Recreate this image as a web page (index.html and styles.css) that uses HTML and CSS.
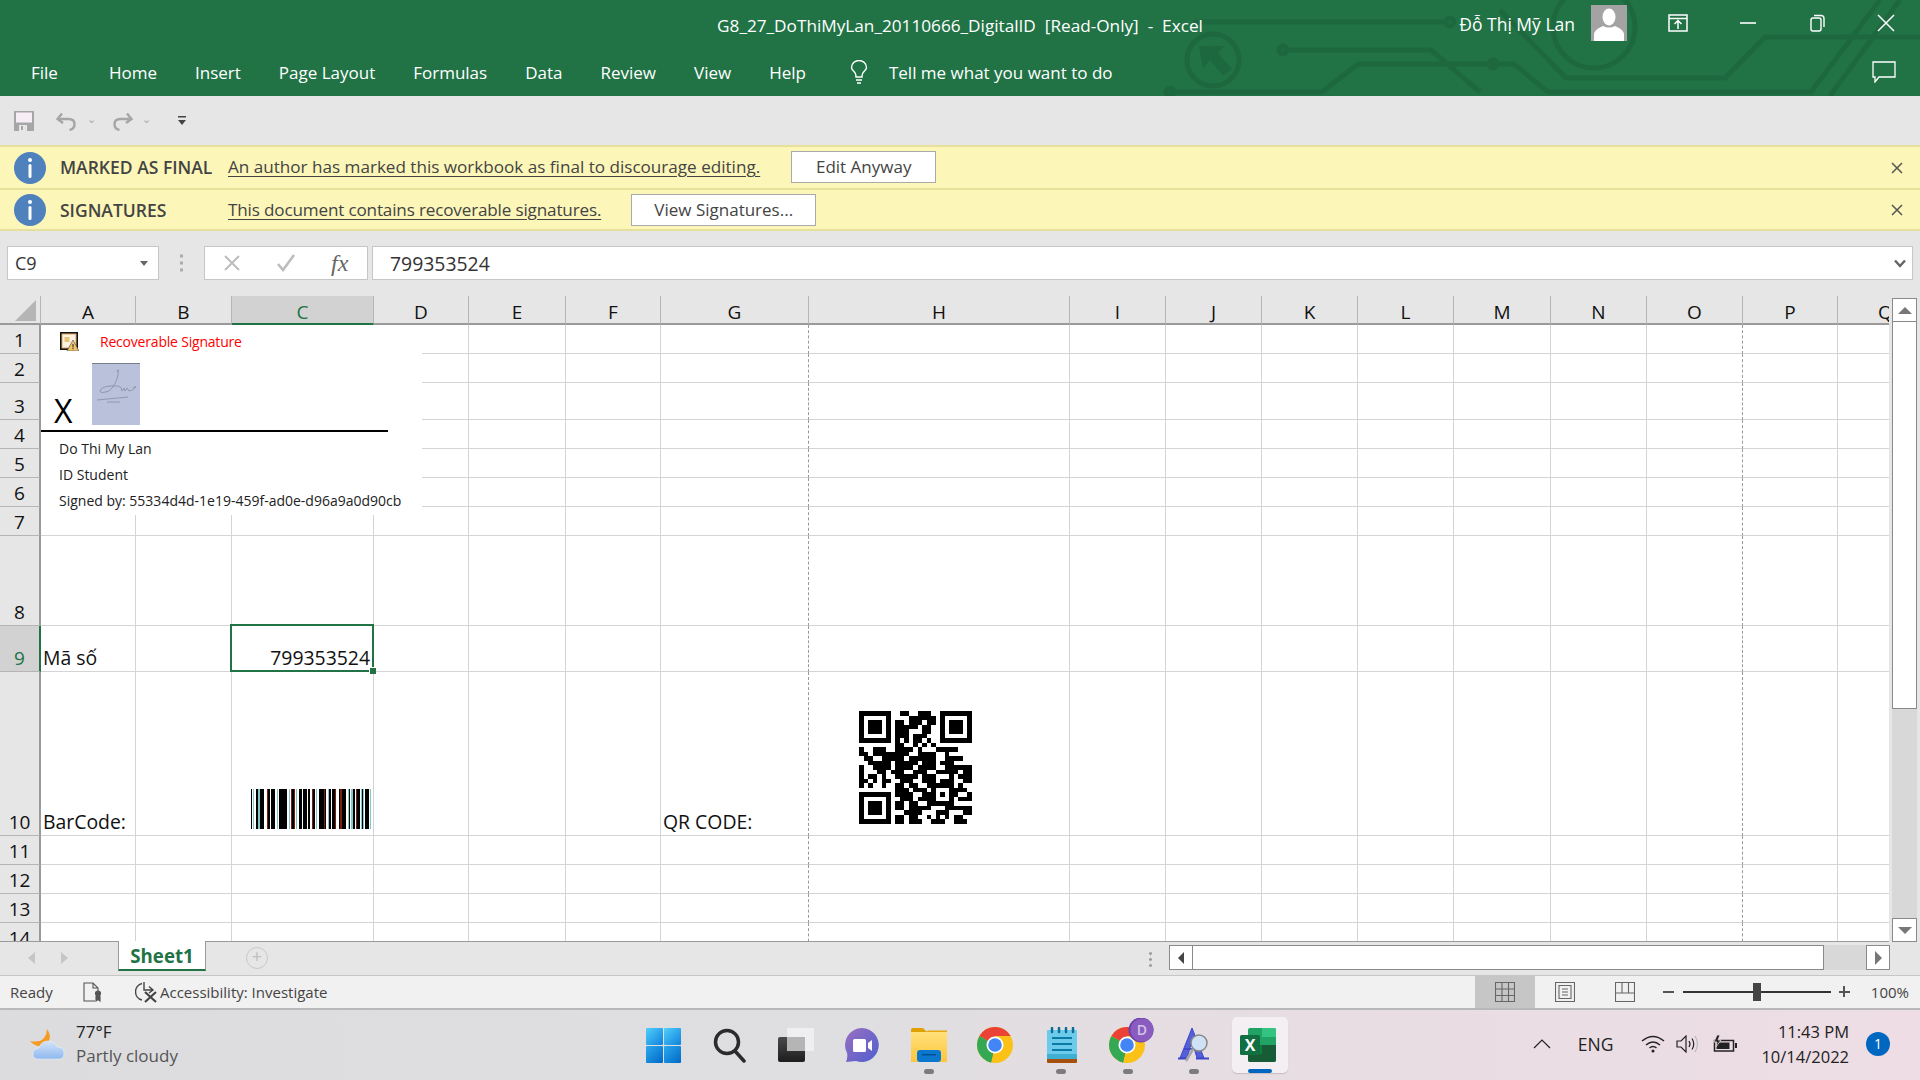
FILE: index.html
```html
<!DOCTYPE html>
<html>

<head>
    <title>G8_27_DoThiMyLan_20110666_DigitalID [Read-Only] - Excel</title>
    <meta charset="UTF-8">
    <meta name="viewport" content="width=device-width, initial-scale=1.0">
    <link rel="stylesheet" href="styles.css">
</head>

<body>
    <header class="ribbon">
        <svg class="circuit" width="1920" height="96" viewBox="0 0 1920 96" fill="none">
            <path d="M1193 22H1446M1283 50H1431L1480 92M1170 92H1322L1358 64H1514L1548 92H1811L1880 0M1500 10L1566 78H1725L1765 37H1920M1830 96L1900 0" />
            <circle cx="1213" cy="60" r="26" />
            <circle cx="1594" cy="27" r="41" />
            <circle cx="1450" cy="22" r="4" />
            <circle cx="1283" cy="50" r="4" />
            <circle cx="1493" cy="64" r="4" />
            <circle cx="1170" cy="92" r="4" />
            <path class="circuit-fill" d="M1199 46H1224L1218 53L1232 69L1223 76L1210 60L1203 69Z" />
        </svg>
        <div class="title-row">
            <div></div>
            <div class="doc-title">G8_27_DoThiMyLan_20110666_DigitalID&nbsp; [Read-Only]&nbsp; -&nbsp; Excel</div>
            <div class="window-tools">
                <span class="user-name">Đỗ Thị Mỹ Lan</span>
                <svg class="avatar" width="36" height="36" viewBox="0 0 36 36">
                    <rect width="36" height="36" fill="#a3a3a3" />
                    <ellipse cx="18" cy="12" rx="6.5" ry="8.5" fill="#fff" />
                    <path d="M3 36V29Q4 24 12 21Q18 24 24 21Q32 24 33 29V36Z" fill="#fff" />
                </svg>
                <svg class="win-btn first" width="20" height="20" viewBox="0 0 20 20" fill="none" stroke="#fff" stroke-width="1.5">
                    <rect x="1" y="2" width="18" height="16" />
                    <path d="M1 5.5H19M10 16V8M6.5 11L10 7.5L13.5 11" />
                </svg>
                <svg class="win-btn" width="18" height="18" viewBox="0 0 18 18" stroke="#fff" stroke-width="1.6">
                    <path d="M1 9H17" />
                </svg>
                <svg class="win-btn" width="18" height="18" viewBox="0 0 18 18" fill="none" stroke="#fff" stroke-width="1.4">
                    <rect x="3" y="4" width="10" height="13" rx="2" />
                    <path d="M6 1.5H13Q16 1.5 16 4.5V13" />
                </svg>
                <svg class="win-btn" width="18" height="18" viewBox="0 0 18 18" stroke="#fff" stroke-width="1.5">
                    <path d="M1 1L17 17M17 1L1 17" />
                </svg>
            </div>
        </div>
        <nav class="tabs">
            <a class="tab-file">File</a>
            <a>Home</a>
            <a>Insert</a>
            <a>Page Layout</a>
            <a>Formulas</a>
            <a>Data</a>
            <a>Review</a>
            <a>View</a>
            <a>Help</a>
            <svg class="bulb" width="18" height="24" viewBox="0 0 18 24" fill="none" stroke="#fff" stroke-width="1.4">
                <path d="M6 17Q6 13 3.5 11Q1.5 9 1.5 7.5A7.5 7 0 0 1 16.500 7.500Q16.500 9 14.500 11Q12 13 12 17Z" />
                <path d="M6 20H12M7 23H11" />
            </svg>
            <a class="tell-me">Tell me what you want to do</a>
            <svg class="comments" width="24" height="22" viewBox="0 0 24 22" fill="none" stroke="#fff" stroke-width="1.3">
                <path d="M1 1H23V16H7L3 21V16H1Z" />
            </svg>
        </nav>
    </header>

    <div class="quick-access">
        <svg width="20" height="20" viewBox="0 0 20 20">
            <rect width="20" height="20" fill="#a6a6a6" />
            <rect x="2" y="1.500" width="16" height="10" fill="#f6eef4" />
            <rect x="5" y="14" width="8" height="6" fill="#e6e6e6" />
            <rect x="7" y="15" width="2" height="4" fill="#a6a6a6" />
        </svg>
        <svg class="qa-undo" width="24" height="20" viewBox="0 0 23 20" fill="none" stroke="#a6a6a6" stroke-width="2.400">
            <path d="M2 8H13Q19 8 19 13T14 19M6.500 2.500L2 8L7.500 12" />
        </svg>
        <span class="qa-chevron">⌄</span>
        <svg class="qa-redo" width="24" height="20" viewBox="0 0 23 20" fill="none" stroke="#a6a6a6" stroke-width="2.400">
            <path d="M21 8H10Q4 8 4 13T9 19M16.500 2.500L21 8L15.500 12" />
        </svg>
        <span class="qa-chevron">⌄</span>
        <svg class="qa-more" width="8" height="10" viewBox="0 0 8 10" fill="#444">
            <rect y="0" width="8" height="1.500" />
            <path d="M0 4H8L4 9Z" />
        </svg>
    </div>

    <div class="message-bar">
        <svg class="info" width="32" height="32" viewBox="0 0 32 32">
            <circle cx="16" cy="16" r="16" fill="#4f81bd" />
            <circle cx="16" cy="8" r="2" fill="#fff" />
            <rect x="14.500" y="12" width="3" height="14" rx="1.500" fill="#fff" />
        </svg>
        <strong class="message-title">MARKED AS FINAL</strong>
        <a class="message-link">An author has marked this workbook as final to discourage editing.</a>
        <button class="message-btn btn-edit">Edit Anyway</button>
        <svg class="message-close" width="12" height="12" viewBox="0 0 12 12" stroke="#555" stroke-width="1.500">
            <path d="M1 1L11 11M11 1L1 11" />
        </svg>
    </div>
    <div class="message-bar">
        <svg class="info" width="32" height="32" viewBox="0 0 32 32">
            <circle cx="16" cy="16" r="16" fill="#4f81bd" />
            <circle cx="16" cy="8" r="2" fill="#fff" />
            <rect x="14.500" y="12" width="3" height="14" rx="1.500" fill="#fff" />
        </svg>
        <strong class="message-title">SIGNATURES</strong>
        <a class="message-link link-tight">This document contains recoverable signatures.</a>
        <button class="message-btn btn-view">View Signatures...</button>
        <svg class="message-close" width="12" height="12" viewBox="0 0 12 12" stroke="#555" stroke-width="1.500">
            <path d="M1 1L11 11M11 1L1 11" />
        </svg>
    </div>

    <div class="formula-bar">
        <div class="name-box">
            <span>C9</span>
            <i class="caret"></i>
        </div>
        <div class="grip"></div>
        <div class="fx-box">
            <svg width="18" height="18" viewBox="0 0 18 18" stroke="#bdbdbd" stroke-width="2">
                <path d="M2 2L16 16M16 2L2 16" />
            </svg>
            <svg width="20" height="18" viewBox="0 0 20 18" fill="none" stroke="#bdbdbd" stroke-width="2.600">
                <path d="M2 10L7 16L18 1" />
            </svg>
            <span class="fx-label">fx</span>
        </div>
        <div class="formula-input">
            <span>799353524</span>
            <svg width="12" height="9" viewBox="0 0 12 9" fill="none" stroke="#666" stroke-width="2.500">
                <path d="M1 1.500L6 7L11 1.500" />
            </svg>
        </div>
    </div>

    <div class="workbook">
        <div class="sheet-view">
            <table class="sheet" id="sheet"></table>
            <i class="corner"></i>

            <div class="signature-line">
                <div class="sig-flag">
                    <svg width="19" height="19" viewBox="0 0 19 19">
                        <rect width="18" height="18" fill="#111" />
                        <rect x="2" y="2" width="14" height="14" fill="#fbf3df" stroke="#d9a36a" />
                        <rect x="4.500" y="5" width="5" height="5" fill="#e9c27a" />
                        <path d="M13 8L19 19H7Z" fill="#f2c469" stroke="#444" stroke-width=".6" />
                        <rect x="12.500" y="12" width="1" height="3.500" fill="#222" />
                        <rect x="12.500" y="16" width="1" height="1.200" fill="#222" />
                    </svg>
                    <span>Recoverable Signature</span>
                </div>
                <div class="sig-mark">
                    <span class="sig-x">X</span>
                    <svg class="sig-image" width="48" height="62" viewBox="0 0 48 62" fill="none" stroke="#868ea5" stroke-width=".8">
                        <rect width="48" height="62" fill="#b9c2da" stroke="none" />
                        <rect width="48" height="1" fill="#787d8c" stroke="none" />
                        <path d="M25 9Q27 3 26 12Q24 22 17 28Q8 31 8 28Q9 24 18 23L26 23Q30 24 30 28L32 25L33 28L35 25L37 28Q40 28 44 24Q43 23 41 25" />
                        <path d="M5 37L36 34M15 39H28" />
                    </svg>
                </div>
                <div class="sig-rule"></div>
                <div class="sig-details">Do Thi My Lan</div>
                <div class="sig-details">ID Student</div>
                <div class="sig-details">Signed by: 55334d4d-1e19-459f-ad0e-d96a9a0d90cb</div>
            </div>

            <div class="selection"><i></i></div>
            <svg class="barcode" id="barcode" width="120" height="40" viewBox="0 0 120 40" shape-rendering="crispEdges"></svg>
            <svg class="qr" id="qr" width="113" height="113" viewBox="0 0 25 25" shape-rendering="crispEdges"></svg>
        </div>

        <div class="vscroll">
            <button class="scroll-btn"><i class="arrow-up"></i></button>
            <div class="vthumb"></div>
            <div class="vtrack"></div>
            <button class="scroll-btn"><i class="arrow-down"></i></button>
        </div>
    </div>

    <div class="sheet-bar">
        <i class="nav-arrow nav-left"></i>
        <i class="nav-arrow nav-right"></i>
        <div class="sheet-tab">Sheet1</div>
        <div class="add-sheet">+</div>
        <div class="hscroll-grip"></div>
        <div class="hscroll">
            <button class="hscroll-btn"><i class="arrow-left"></i></button>
            <div class="hthumb"></div>
            <div class="htrack"></div>
            <button class="hscroll-btn"><i class="arrow-right"></i></button>
        </div>
    </div>

    <footer class="status-bar">
        <span class="status-ready">Ready</span>
        <svg class="status-doc" width="20" height="20" viewBox="0 0 20 20" fill="none" stroke="#555" stroke-width="1.100">
            <path d="M12 19H1V1H10L15 6V9M10 1V6H15" />
            <circle cx="15" cy="11.500" r="2.500" fill="#555" />
            <path d="M13 14V19L15 17.500L17 19V14" fill="#555" />
        </svg>
        <svg class="status-a11y" width="22" height="22" viewBox="0 0 22 22" fill="none" stroke="#444" stroke-width="1.400">
            <path d="M7 2.500A8.500 8.500 0 0 0 7 19M9 1V9H18M14 5.500L18 9L14 12" />
            <path d="M10 11L21 21M21 11L10 21" stroke-width="2.200" />
        </svg>
        <span class="status-a11y-text">Accessibility: Investigate</span>
        <div class="view-buttons">
            <div class="view-btn active">
                <svg width="20" height="20" viewBox="0 0 20 20" fill="none" stroke="#666" stroke-width="1.100">
                    <path d="M.5 .5H19.500V19.500H.5ZM7 .5V19.500M13.500 .5V19.500M.5 7H19.500M.5 13.500H19.500" />
                </svg>
            </div>
            <div class="view-btn">
                <svg width="20" height="20" viewBox="0 0 20 20" fill="none" stroke="#666" stroke-width="1.100">
                    <path d="M.5 .5H19.500V19.500H.5ZM4 3.500H16V16.500H4ZM7 7H13M7 10H13M7 13H13" />
                </svg>
            </div>
            <div class="view-btn">
                <svg width="20" height="20" viewBox="0 0 20 20" fill="none" stroke="#666" stroke-width="1.100">
                    <path d="M.5 .5H19.500V19.500H.5ZM.5 11H19.500M7 .5V11M13.500 .5V11" />
                </svg>
            </div>
        </div>
        <div class="zoom">
            <span class="zoom-minus"></span>
            <div class="zoom-track"><i></i></div>
            <span class="zoom-plus"></span>
            <span class="zoom-value">100%</span>
        </div>
    </footer>

    <div class="taskbar">
        <div class="weather">
            <svg width="36" height="32" viewBox="0 0 36 32">
                <defs>
                    <linearGradient id="cloud" x1="0" y1="0" x2="0" y2="1">
                        <stop offset="0" stop-color="#d3e4f8" />
                        <stop offset="1" stop-color="#8fb9ef" />
                    </linearGradient>
                </defs>
                <path d="M17 0Q24 10 14 17Q6 19 0 12Q10 14 14 9Q17 5 17 0Z" fill="#f59a23" />
                <path d="M8 30Q3 30 3 25T9 19Q11 12 18 12T27 18Q34 18 34 24T29 30Z" fill="url(#cloud)" stroke="#e4eefa" stroke-width=".6" />
            </svg>
            <div class="weather-text">
                <div class="temp">77°F</div>
                <div class="sky">Partly cloudy</div>
            </div>
        </div>

        <div class="task-icons">
            <div class="task-icon">
                <svg width="35" height="35" viewBox="0 0 35 35">
                    <defs>
                        <linearGradient id="winTop" x1="0" y1="0" x2="1" y2="1">
                            <stop offset="0" stop-color="#52cffb" />
                            <stop offset="1" stop-color="#0d82dc" />
                        </linearGradient>
                        <linearGradient id="winBottom" x1="0" y1="0" x2="1" y2="1">
                            <stop offset="0" stop-color="#2aa9ef" />
                            <stop offset="1" stop-color="#0069c6" />
                        </linearGradient>
                    </defs>
                    <rect width="17" height="17" rx="1" fill="url(#winTop)" />
                    <rect x="18" width="17" height="17" rx="1" fill="url(#winTop)" />
                    <rect y="18" width="17" height="17" rx="1" fill="url(#winBottom)" />
                    <rect x="18" y="18" width="17" height="17" rx="1" fill="url(#winBottom)" />
                </svg>
            </div>
            <div class="task-icon">
                <svg width="34" height="35" viewBox="0 0 34 35" fill="none" stroke="#2b2b2b" stroke-width="3.500">
                    <circle cx="14" cy="14" r="11.500" />
                    <path d="M22 23L31 33" stroke-linecap="round" />
                </svg>
            </div>
            <div class="task-icon">
                <svg width="36" height="35" viewBox="0 0 36 35">
                    <defs>
                        <linearGradient id="taskDark" x1="0" y1="0" x2="0" y2="1">
                            <stop offset="0" stop-color="#4a4a4a" />
                            <stop offset="1" stop-color="#1d1d1d" />
                        </linearGradient>
                    </defs>
                    <rect y="9" width="27" height="25" rx="2" fill="url(#taskDark)" />
                    <rect x="9" width="27" height="23" fill="#f1f0f2" opacity=".9" />
                    <rect x="9" y="9" width="18" height="14" fill="#b5b5b5" />
                </svg>
            </div>
            <div class="task-icon">
                <svg width="34" height="35" viewBox="0 0 34 35">
                    <defs>
                        <linearGradient id="chat" x1="0" y1="0" x2="1" y2="1">
                            <stop offset="0" stop-color="#9a6fc0" />
                            <stop offset="1" stop-color="#4f5fd0" />
                        </linearGradient>
                    </defs>
                    <path d="M17 0A17 17 0 1 1 11 33L1 34Q3 29 2 25A17 17 0 0 1 17 0Z" fill="url(#chat)" />
                    <rect x="8" y="11" width="13" height="13" rx="1.500" fill="#fff" />
                    <path d="M23 15L27 12V23L23 20Z" fill="#fff" />
                </svg>
            </div>
            <div class="task-icon has-dot">
                <svg width="36" height="34" viewBox="0 0 36 34">
                    <defs>
                        <linearGradient id="folder" x1="0" y1="0" x2="0" y2="1">
                            <stop offset="0" stop-color="#ffe07a" />
                            <stop offset="1" stop-color="#fdc63e" />
                        </linearGradient>
                    </defs>
                    <path d="M0 2Q0 0 2 0H12L15 3V6H0Z" fill="#dfa000" />
                    <rect y="4" width="36" height="30" fill="url(#folder)" />
                    <path d="M0 4H14L17 2.500H36V4H0Z" fill="#e7a90f" />
                    <rect x="6" y="22" width="24" height="12" rx="3" fill="#0a78cf" />
                    <rect x="11" y="26" width="14" height="1.500" fill="#04508e" />
                </svg>
            </div>
            <div class="task-icon">
                <svg width="36" height="36" viewBox="0 0 36 36">
                    <use href="#chrome" />
                </svg>
            </div>
            <div class="task-icon has-dot">
                <svg width="30" height="36" viewBox="0 0 30 36">
                    <path d="M0 30H30V35Q30 36 29 36H1Q0 36 0 35Z" fill="#a6500f" />
                    <rect y="3" width="30" height="29" rx="1" fill="#6ccaea" />
                    <rect y="27" width="30" height="5" fill="#3fb0d4" />
                    <path d="M5 11H25M5 17H25M5 23H25" stroke="#0a7ba6" stroke-width="1.800" />
                    <path d="M5 1V5M12 1V5M19 1V5M26 1V5" stroke="#0a6f96" stroke-width="2.500" stroke-linecap="round" />
                </svg>
            </div>
            <div class="task-icon has-dot">
                <svg class="chrome-badged" width="46" height="46" viewBox="0 0 46 46">
                    <svg x="0" y="9" width="36" height="36" viewBox="0 0 36 36">
                        <use href="#chrome" />
                    </svg>
                    <circle cx="32" cy="12" r="12.500" fill="#6a3fa8" />
                    <circle cx="33" cy="12" r="11.500" fill="#8a5cc0" />
                    <text x="33" y="17" font-size="14" font-weight="600" text-anchor="middle" fill="#d4c4ea" font-family="Open Sans">D</text>
                </svg>
            </div>
            <div class="task-icon has-dot">
                <svg width="32" height="36" viewBox="0 0 32 36">
                    <path d="M2 31L14 1L26 31H19L14 14L9 31Z" fill="#5560d8" stroke="#3c47c9" stroke-width="1" />
                    <path d="M6 22H21" stroke="#3c47c9" stroke-width="1.800" />
                    <path d="M0 31.500H10M18 31.500H31" stroke="#3c47c9" stroke-width="1.800" />
                    <circle cx="21" cy="16" r="8" fill="#cfe2f5" stroke="#888" stroke-width="1.500" />
                    <path d="M15 22L8 34" stroke="#a6a6a6" stroke-width="2.500" />
                </svg>
            </div>
            <div class="task-icon active">
                <svg width="36" height="34" viewBox="0 0 36 34">
                    <path d="M8 2Q8 0 10 0H34Q36 0 36 2V32Q36 34 34 34H10Q8 34 8 32Z" fill="#21a366" />
                    <path d="M22 0H34Q36 0 36 2V9H22Z" fill="#33c481" />
                    <rect x="8" y="17" width="28" height="9" fill="#107c41" />
                    <path d="M22 17H36V26H22Z" fill="#185c37" />
                    <path d="M8 26H36V32Q36 34 34 34H10Q8 34 8 32Z" fill="#185c37" />
                    <rect y="7" width="20" height="20" rx="1.500" fill="#107041" />
                    <text x="10" y="23" font-size="16" font-weight="700" text-anchor="middle" fill="#fff" font-family="Open Sans">X</text>
                </svg>
            </div>
        </div>

        <div class="tray">
            <svg width="18" height="10" viewBox="0 0 18 10" fill="none" stroke="#222" stroke-width="1.200">
                <path d="M1 9L9 1L17 9" />
            </svg>
            <span class="tray-lang">ENG</span>
            <svg class="tray-wifi" width="24" height="18" viewBox="0 0 24 18" fill="none" stroke="#222" stroke-width="1.500">
                <path d="M1 6Q12 -3 23 6M5 10Q12 4 19 10M8.500 13Q12 10 15.500 13" />
                <circle cx="12" cy="16" r="1.500" fill="#222" stroke="none" />
            </svg>
            <svg class="tray-sound" width="24" height="18" viewBox="0 0 24 18" fill="none" stroke="#222" stroke-width="1.200">
                <path d="M1 6H5L10 1V17L5 12H1Z" />
                <path d="M13 6Q15 9 13 12M16 3.500Q19.500 9 16 14.500" />
                <path d="M19 1Q24 9 19 17" stroke="#bbb" />
            </svg>
            <svg class="tray-battery" width="24" height="18" viewBox="0 0 24 18">
                <path d="M1.500 5.500H20.500V16H1.500Z" fill="none" stroke="#222" stroke-width="1.500" />
                <rect x="3.500" y="7.500" width="13" height="6.500" fill="#222" />
                <rect x="22" y="8" width="2" height="5" fill="#222" />
                <path d="M4 0L1 7H4L3 12L8 5H5L7 0Z" fill="#222" stroke="#eddde4" stroke-width=".8" />
            </svg>
            <div class="clock">
                <div>11:43 PM</div>
                <div>10/14/2022</div>
            </div>
            <div class="notify">1</div>
        </div>
    </div>

    <svg class="defs-only" width="0" height="0">
        <defs>
            <g id="chrome">
                <circle cx="18" cy="18" r="18" fill="#fbc116" />
                <path d="M18 18L2.400 9A18 18 0 0 1 33.600 9H18Z" fill="#ea4335" />
                <path d="M18 18L2.400 9A18 18 0 0 0 14 35.500L18 18Z" fill="#34a853" />
                <path d="M18 18L14 35.500A18 18 0 0 1 9 33.600L18 18Z" fill="#34a853" />
                <circle cx="18" cy="18" r="8.500" fill="#fff" />
                <circle cx="18" cy="18" r="6.800" fill="#4285f4" />
            </g>
        </defs>
    </svg>

    <script>
        const columns = [
            ["A", 95], ["B", 96], ["C", 142], ["D", 95], ["E", 97], ["F", 95], ["G", 148], ["H", 261],
            ["I", 96], ["J", 96], ["K", 96], ["L", 96], ["M", 97], ["N", 96], ["O", 96], ["P", 95], ["Q", 96]
        ];
        const rowHeights = [29, 29, 37, 29, 29, 29, 29, 90, 46, 164, 29, 29, 29, 29];
        const cells = {
            "9-A": "Mã số",
            "9-C": "799353524",
            "10-A": "BarCode:",
            "10-G": "QR CODE:"
        };

        function buildSheet() {
            let html = '<colgroup><col style="width:41px">';
            html += columns.map(col => `<col style="width:${col[1]}px">`).join("") + "</colgroup>";

            html += '<tr class="col-heads"><th></th>';
            columns.forEach((col, i) => {
                const selected = i === 2 ? "selected" : "";
                html += `<th class="${selected}">${col[0]}</th>`;
            });
            html += "</tr>";

            rowHeights.forEach((height, r) => {
                const num = r + 1;
                const selected = num === 9 ? "selected" : "";
                html += `<tr style="height:${height}px"><th class="row-head ${selected}">${num}</th>`;
                columns.forEach((col, i) => {
                    const key = num + "-" + col[0];
                    const text = cells[key] ? cells[key] : "";
                    // G and O end a printed page
                    const classes = [];
                    if (i === 6 || i === 14) classes.push("page-break");
                    if (key === "9-C") classes.push("number");
                    html += `<td class="${classes.join(" ")}">${text}</td>`;
                });
                html += "</tr>";
            });

            document.getElementById("sheet").innerHTML = html;
        }

        const qrRows = [
            "1111111001100111001111111",
            "1000001000011111101000001",
            "1011101011011101101011101",
            "1011101011111011001011101",
            "1011101011100011001011101",
            "1000001011101110001000001",
            "1111111010101101001111111",
            "0000000011001010100000000",
            "1001110011110100011111000",
            "1101111111100111100100000",
            "0110011111011111100111100",
            "0011111011111011101110000",
            "1001111011110111100111111",
            "1000110111001110011111011",
            "1011010011111011100010111",
            "1101011001110011101110011",
            "1010010011011001111110100",
            "0000000011101110100011110",
            "1111111011110011101011001",
            "1000001001110111100010111",
            "1011101011011001111110000",
            "1011101011011111000111111",
            "1011101000111100011100011",
            "1000001011011001010101100",
            "1111111011011100111001110"
        ];

        function buildQr() {
            let rects = "";
            qrRows.forEach((row, y) => {
                [...row].forEach((module, x) => {
                    if (module === "1") rects += `<rect x="${x}" y="${y}" width="1" height="1"/>`;
                });
            });
            document.getElementById("qr").innerHTML = rects;
        }

        // one letter per pixel column of the barcode
        const barColors = { k: "#000", w: "#fff", t: "#7fc8c8", r: "#7a1f10" };
        const barPixels = "kwtwwkkttkkkkwwwrkkwkkkkwwtwkkkkkkkkwwtwrkkrwtwwkkkwkkkkwkkwwrkkwtwwkkkkkrkwwtkkwkkkrwwwkrrkkkkwwtkwttkkwrkkkwtktwkkkkwtk";

        function buildBarcode() {
            let rects = "";
            [...barPixels].forEach((letter, x) => {
                rects += `<rect x="${x}" y="0" width="1" height="40" fill="${barColors[letter]}"/>`;
            });
            document.getElementById("barcode").innerHTML = rects;
        }

        buildSheet();
        buildQr();
        buildBarcode();
    </script>
</body>

</html>
```

FILE: styles.css
```css
* {
    box-sizing: border-box;
}

body {
    font-family: "Open Sans", "Noto Sans", sans-serif;
    margin: 0;
    padding: 0;
    width: 1920px;
    height: 1080px;
    overflow: hidden;
    background-color: #e6e6e6;
    color: #222;
}

i {
    display: block;
}

/* title bar and tabs */

.ribbon {
    position: relative;
    height: 96px;
    background-color: #217346;
    color: white;
}

.circuit {
    position: absolute;
    top: 0;
    left: 0;
}

.circuit path,
.circuit circle {
    stroke: #1e6840;
    stroke-width: 5;
}

.circuit .circuit-fill {
    fill: #1e6840;
    stroke: none;
}

.title-row {
    position: relative;
    height: 48px;
    display: grid;
    grid-template-columns: 1fr auto 1fr;
    align-items: center;
}

.doc-title {
    font-size: 17.200px;
    padding-top: 2px;
    white-space: nowrap;
}

.window-tools {
    display: flex;
    align-items: center;
    justify-content: flex-end;
    padding-right: 25px;
}

.user-name {
    font-size: 17.500px;
    margin-right: 16px;
}

.avatar {
    margin-top: -3px;
}

.win-btn {
    margin-left: 51px;
    margin-top: -3px;
}

.win-btn.first {
    margin-left: 41px;
}

.tabs {
    position: relative;
    height: 48px;
    display: flex;
    align-items: center;
    gap: 38px;
    padding-left: 31px;
    font-size: 17px;
}

.tab-file {
    margin-right: 13px;
}

.bulb {
    margin-left: 6px;
    margin-right: -17px;
}

.comments {
    margin-left: auto;
    margin-right: 24px;
}

/* quick access */

.quick-access {
    height: 49px;
    display: flex;
    align-items: center;
    padding-left: 14px;
}

.qa-undo {
    margin-left: 21px;
}

.qa-redo {
    margin-left: 14px;
}

.qa-chevron {
    color: #aaa;
    font-size: 11px;
    margin-left: 8px;
    margin-top: -5px;
}

.qa-more {
    margin-left: 27px;
}

/* message bars */

.message-bar {
    height: 43px;
    display: flex;
    align-items: center;
    background-color: #fcf6b8;
    border-top: 2px solid #e6e09a;
    padding-left: 14px;
    padding-right: 17px;
    font-size: 17.100px;
    color: #444;
}

.message-bar + .message-bar {
    border-bottom: 2px solid #e6e09a;
}

.info {
    flex: none;
}

.message-title {
    width: 168px;
    margin-left: 14px;
    font-weight: 600;
    font-size: 17.500px;
    white-space: nowrap;
}

.message-link {
    text-decoration: underline;
    text-underline-offset: 3px;
    white-space: nowrap;
}

.link-tight {
    letter-spacing: -0.160px;
}

.message-link,
.message-title,
.message-btn {
    position: relative;
    top: -1px;
}

.message-bar + .message-bar .message-link,
.message-bar + .message-bar .message-title,
.message-bar + .message-bar .message-btn {
    top: 0;
}

.message-btn {
    height: 32px;
    background-color: white;
    border: 1px solid #aaa;
    font-family: inherit;
    font-size: 17px;
    color: #444;
    padding: 0;
}

.btn-edit {
    width: 145px;
    margin-left: 31px;
}

.btn-view {
    width: 185px;
    margin-left: 30px;
}

.message-close {
    margin-left: auto;
}

/* formula bar */

.formula-bar {
    height: 65px;
    display: flex;
    padding: 15px 7px 16px 7px;
    font-size: 18px;
    color: #333;
}

.name-box,
.fx-box,
.formula-input {
    background-color: white;
    border: 1px solid #c6c6c6;
    display: flex;
    align-items: center;
}

.name-box {
    width: 152px;
    padding: 0 10px 0 7px;
    justify-content: space-between;
}

.caret {
    width: 0;
    height: 0;
    border-left: 4px solid transparent;
    border-right: 4px solid transparent;
    border-top: 5px solid #666;
}

.grip {
    width: 45px;
    background: radial-gradient(circle at center, #aaa 1.400px, transparent 1.600px) center / 3px 7px repeat-y;
    background-clip: content-box;
    padding: 7px 0;
}

.fx-box {
    width: 164px;
    margin-right: 4px;
    padding-left: 18px;
    gap: 35px;
    color: #666;
}

.fx-label {
    font-family: "Liberation Serif", serif;
    font-style: italic;
    font-size: 24px;
}

.formula-input {
    flex: 1;
    justify-content: space-between;
    padding: 0 6px 0 17px;
    font-size: 19.400px;
}

/* sheet */

.workbook {
    height: 646px;
    display: flex;
}

.sheet-view {
    position: relative;
    width: 1889px;
    height: 646px;
    overflow: hidden;
    border-bottom: 1px solid #9a9a9a;
}

.sheet {
    table-layout: fixed;
    width: 1934px;
    border-collapse: separate;
    border-spacing: 0;
    background-color: white;
    font-size: 19.400px;
    color: #111;
}

.sheet th,
.sheet td {
    padding: 0;
    border-right: 1px solid #d4d4d4;
    border-bottom: 1px solid #d4d4d4;
    vertical-align: bottom;
    font-weight: 400;
    line-height: 26px;
    white-space: nowrap;
    overflow: hidden;
}

.sheet td {
    padding-left: 2px;
}

.sheet td.number {
    text-align: right;
    padding-right: 3px;
}

.sheet td.page-break {
    border-right: 1px dashed #9a9a9a;
}

.sheet th {
    background-color: #e6e6e6;
    font-size: 19px;
    text-align: center;
    border-right-color: #b5b5b5;
}

.col-heads {
    height: 29px;
}

.col-heads th {
    border-bottom: 2px solid #9a9a9a;
    line-height: 22px;
}

.sheet .row-head {
    border-right: 2px solid #9a9a9a;
    border-bottom-color: #b5b5b5;
}

.sheet th.selected {
    background-color: #d2d2d2;
    color: #217346;
}

.col-heads th.selected {
    border-bottom-color: #217346;
}

.sheet .row-head.selected {
    border-right-color: #217346;
}

.corner {
    position: absolute;
    top: 4px;
    left: 15px;
    width: 0;
    height: 0;
    border-left: 21px solid transparent;
    border-bottom: 21px solid #b5b5b5;
}

/* floating objects on the sheet */

.signature-line {
    position: absolute;
    top: 29px;
    left: 41px;
    width: 381px;
    height: 190px;
    background-color: white;
    font-size: 14px;
}

.sig-flag {
    height: 36px;
    display: flex;
    align-items: center;
    padding-left: 19px;
    padding-bottom: 4px;
    color: #f00;
}

.sig-flag span {
    margin-left: 21px;
    letter-spacing: -0.2px;
}

.sig-mark {
    height: 66px;
    display: flex;
    align-items: flex-end;
    padding-left: 13px;
}

.sig-x {
    font-size: 32px;
    line-height: 32px;
    color: #000;
}

.sig-image {
    margin-left: 20px;
    margin-bottom: 2px;
}

.sig-rule {
    width: 347px;
    height: 2px;
    margin-top: 3px;
    background-color: #000;
}

.sig-details {
    height: 26px;
    line-height: 26px;
    padding-left: 18px;
    color: #222;
    white-space: nowrap;
}

.sig-rule + .sig-details {
    margin-top: 4px;
}

.selection {
    position: absolute;
    top: 328px;
    left: 230px;
    width: 144px;
    height: 48px;
    border: 2px solid #217346;
}

.selection i {
    position: absolute;
    right: -4px;
    bottom: -4px;
    width: 7px;
    height: 7px;
    background-color: #217346;
    border: 1px solid white;
    border-width: 1px 0 0 1px;
}

.barcode {
    position: absolute;
    top: 493px;
    left: 251px;
}

.qr {
    position: absolute;
    top: 415px;
    left: 859px;
}

/* scroll bars */

.vscroll {
    width: 26px;
    margin-left: 3px;
    padding-top: 2px;
    display: flex;
    flex-direction: column;
}

.scroll-btn,
.hscroll-btn {
    flex: none;
    padding: 0;
    background-color: white;
    border: 1px solid #8a8a8a;
    display: flex;
    align-items: center;
    justify-content: center;
}

.scroll-btn {
    width: 25px;
    height: 24px;
}

.arrow-up,
.arrow-down,
.arrow-left,
.arrow-right {
    width: 0;
    height: 0;
}

.arrow-up {
    border-left: 7px solid transparent;
    border-right: 7px solid transparent;
    border-bottom: 7px solid #777;
}

.arrow-down {
    border-left: 7px solid transparent;
    border-right: 7px solid transparent;
    border-top: 7px solid #777;
}

.arrow-left {
    border-top: 6px solid transparent;
    border-bottom: 6px solid transparent;
    border-right: 6px solid #444;
}

.arrow-right {
    border-top: 7px solid transparent;
    border-bottom: 7px solid transparent;
    border-left: 7px solid #777;
}

.vthumb {
    width: 25px;
    height: 387px;
    background-color: white;
    border: 1px solid #8a8a8a;
    border-top: none;
}

.vtrack {
    width: 25px;
    flex: 1;
    background-color: #d8d8d8;
}

/* sheet tabs */

.sheet-bar {
    position: relative;
    height: 34px;
    display: flex;
    align-items: flex-start;
    border-bottom: 1px solid #c6c6c6;
}

.nav-arrow {
    width: 0;
    height: 0;
    margin-top: 10px;
    border-top: 6px solid transparent;
    border-bottom: 6px solid transparent;
}

.nav-left {
    margin-left: 28px;
    border-right: 7px solid #c6c6c6;
}

.nav-right {
    margin-left: 26px;
    border-left: 7px solid #c6c6c6;
}

.sheet-tab {
    width: 88px;
    height: 30px;
    margin-left: 50px;
    margin-top: -1px;
    background-color: white;
    border: 1px solid #9a9a9a;
    border-top: none;
    border-bottom: 2px solid #217346;
    color: #217346;
    font-weight: 700;
    font-size: 18.700px;
    line-height: 29px;
    text-align: center;
}

.add-sheet {
    width: 22px;
    height: 22px;
    margin-left: 40px;
    margin-top: 5px;
    border: 1.500px solid #c9c9c9;
    border-radius: 50%;
    color: #c0c0c0;
    font-size: 18px;
    line-height: 17px;
    text-align: center;
}

.hscroll-grip {
    width: 3px;
    height: 15px;
    margin-left: 881px;
    margin-top: 10px;
    background: radial-gradient(circle at center, #999 1.400px, transparent 1.600px) center / 3px 6px repeat-y;
}

.hscroll {
    display: flex;
    margin-left: 17px;
    margin-top: 3px;
}

.hscroll-btn {
    width: 24px;
    height: 25px;
}

.hthumb {
    width: 631px;
    height: 25px;
    background-color: white;
    border: 1px solid #8a8a8a;
    border-left: none;
}

.htrack {
    width: 42px;
    height: 25px;
    background-color: #d8d8d8;
}

/* status bar */

.status-bar {
    height: 34px;
    display: flex;
    align-items: center;
    background-color: #f1f1f1;
    border-bottom: 2px solid #b8b8b8;
    font-size: 15px;
    color: #444;
    padding-left: 10px;
}

.status-ready {
    width: 73px;
}

.status-doc {
    margin-right: 32px;
}

.status-a11y {
    margin-right: 3px;
}

.view-buttons {
    display: flex;
    margin-left: auto;
    height: 32px;
}

.view-btn {
    width: 60px;
    display: flex;
    align-items: center;
    justify-content: center;
}

.view-btn.active {
    background-color: #c6c6c6;
}

.zoom {
    display: flex;
    align-items: center;
    margin-left: 8px;
    padding-right: 11px;
}

.zoom-minus,
.zoom-plus {
    position: relative;
    width: 11px;
    height: 1.500px;
    background-color: #555;
}

.zoom-plus::after {
    content: "";
    position: absolute;
    left: 4.500px;
    top: -5px;
    width: 1.500px;
    height: 11px;
    background-color: #555;
}

.zoom-track {
    position: relative;
    width: 148px;
    height: 2px;
    margin: 0 8px 0 9px;
    background-color: #333;
}

.zoom-track i {
    position: absolute;
    left: 70px;
    top: -8px;
    width: 8px;
    height: 18px;
    background-color: #444;
}

.zoom-value {
    margin-left: 21px;
}

/* windows taskbar */

.taskbar {
    height: 70px;
    display: flex;
    align-items: center;
    background: linear-gradient(90deg, #dcdcdf 0%, #dfdee1 45%, #e8dde3 70%, #eedde5 100%);
}

.weather {
    width: 630px;
    flex: none;
    display: flex;
    align-items: center;
    padding-left: 30px;
}

.weather-text {
    margin-left: 10px;
    margin-top: -2px;
    font-size: 17px;
    line-height: 24px;
}

.temp {
    color: #222;
}

.sky {
    color: #555;
}

.task-icons {
    display: flex;
    align-items: center;
}

.task-icon {
    position: relative;
    width: 66.400px;
    height: 56px;
    display: flex;
    align-items: center;
    justify-content: center;
}

.task-icon.has-dot::after {
    content: "";
    position: absolute;
    bottom: -1px;
    left: 28px;
    width: 10px;
    height: 5px;
    border-radius: 3px;
    background-color: #7c7c7c;
}

.chrome-badged {
    margin-top: -9px;
    margin-left: 8px;
}

.task-icon.active {
    width: 56px;
    margin-left: 4px;
    padding-right: 4px;
    border-radius: 5px;
    background-color: #f3eff3;
    box-shadow: 0 1px 1px rgba(0, 0, 0, 0.15);
}

.task-icon.active::after {
    content: "";
    position: absolute;
    bottom: 0;
    left: 16px;
    width: 24px;
    height: 4px;
    border-radius: 2px;
    background-color: #0067c0;
}

.tray {
    display: flex;
    align-items: center;
    margin-left: auto;
    margin-top: -2px;
    padding-right: 30px;
    color: #222;
}

.tray-lang {
    font-size: 17.500px;
    margin-left: 27px;
}

.tray-wifi {
    margin-left: 28px;
}

.tray-sound {
    margin-left: 11px;
}

.tray-battery {
    margin-left: 13px;
}

.clock {
    margin-left: 24px;
    font-size: 16.500px;
    line-height: 25px;
    text-align: right;
}

.notify {
    width: 24px;
    height: 24px;
    margin-left: 17px;
    border-radius: 50%;
    background-color: #0067c0;
    color: white;
    font-size: 14px;
    line-height: 24px;
    text-align: center;
}

.defs-only {
    position: absolute;
}
```
